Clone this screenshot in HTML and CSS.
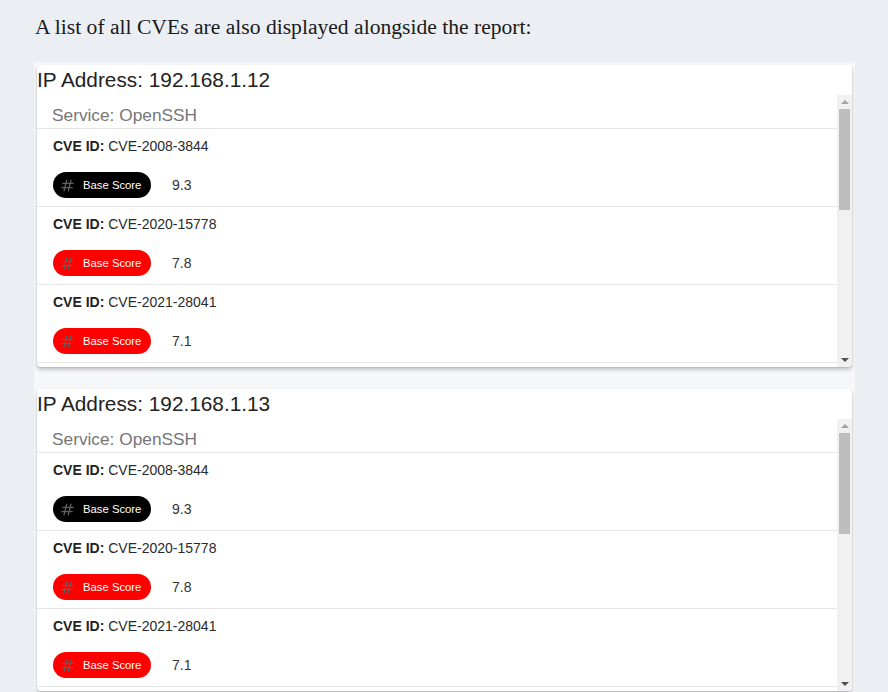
FILE: index.html
```html
<!DOCTYPE html>
<html lang="en">
<head>
<meta charset="utf-8">
<title>CVE list</title>
<link rel="stylesheet" href="styles.css">
</head>
<body>
<div class="page">
  <p class="intro">A list of all CVEs are also displayed alongside the report:</p>
  <div class="band">
    <section class="card">
      <h2 class="card-title">IP Address: 192.168.1.12</h2>
      <div class="card-body">
        <ul class="cve-list">
          <li class="subheader">Service: OpenSSH</li>
          <li class="item"><div class="cve"><b>CVE ID:</b> CVE-2008-3844</div><div class="score-row"><span class="chip chip-critical"><svg class="chip-icon" viewBox="0 0 24 24"><path d="M20.5 10 21 8h-4l1-4h-2l-1 4h-4l1-4h-2L9 8H5l-.5 2h4l-1 4h-4L3 16h4l-1 4h2l1-4h4l-1 4h2l1-4h4l.5-2h-4l1-4h4zm-7 4h-4l1-4h4l-1 4z"/></svg><span class="chip-label">Base Score</span></span><span class="score">9.3</span></div></li>
          <li class="item"><div class="cve"><b>CVE ID:</b> CVE-2020-15778</div><div class="score-row"><span class="chip chip-high"><svg class="chip-icon" viewBox="0 0 24 24"><path d="M20.5 10 21 8h-4l1-4h-2l-1 4h-4l1-4h-2L9 8H5l-.5 2h4l-1 4h-4L3 16h4l-1 4h2l1-4h4l-1 4h2l1-4h4l.5-2h-4l1-4h4zm-7 4h-4l1-4h4l-1 4z"/></svg><span class="chip-label">Base Score</span></span><span class="score">7.8</span></div></li>
          <li class="item"><div class="cve"><b>CVE ID:</b> CVE-2021-28041</div><div class="score-row"><span class="chip chip-high"><svg class="chip-icon" viewBox="0 0 24 24"><path d="M20.5 10 21 8h-4l1-4h-2l-1 4h-4l1-4h-2L9 8H5l-.5 2h4l-1 4h-4L3 16h4l-1 4h2l1-4h4l-1 4h2l1-4h4l.5-2h-4l1-4h4zm-7 4h-4l1-4h4l-1 4z"/></svg><span class="chip-label">Base Score</span></span><span class="score">7.1</span></div></li>
          <li class="item"><div class="cve"><b>CVE ID:</b> CVE-2021-41617</div><div class="score-row"><span class="chip chip-high"><svg class="chip-icon" viewBox="0 0 24 24"><path d="M20.5 10 21 8h-4l1-4h-2l-1 4h-4l1-4h-2L9 8H5l-.5 2h4l-1 4h-4L3 16h4l-1 4h2l1-4h4l-1 4h2l1-4h4l.5-2h-4l1-4h4zm-7 4h-4l1-4h4l-1 4z"/></svg><span class="chip-label">Base Score</span></span><span class="score">7.0</span></div></li>
        </ul>
        <div class="scrollbar" aria-hidden="true">
          <div class="sb-btn"><span class="sb-arrow-up"></span></div>
          <div class="sb-track"><div class="sb-thumb"></div></div>
          <div class="sb-btn"><span class="sb-arrow-down"></span></div>
        </div>
      </div>
    </section>
    <section class="card">
      <h2 class="card-title">IP Address: 192.168.1.13</h2>
      <div class="card-body">
        <ul class="cve-list">
          <li class="subheader">Service: OpenSSH</li>
          <li class="item"><div class="cve"><b>CVE ID:</b> CVE-2008-3844</div><div class="score-row"><span class="chip chip-critical"><svg class="chip-icon" viewBox="0 0 24 24"><path d="M20.5 10 21 8h-4l1-4h-2l-1 4h-4l1-4h-2L9 8H5l-.5 2h4l-1 4h-4L3 16h4l-1 4h2l1-4h4l-1 4h2l1-4h4l.5-2h-4l1-4h4zm-7 4h-4l1-4h4l-1 4z"/></svg><span class="chip-label">Base Score</span></span><span class="score">9.3</span></div></li>
          <li class="item"><div class="cve"><b>CVE ID:</b> CVE-2020-15778</div><div class="score-row"><span class="chip chip-high"><svg class="chip-icon" viewBox="0 0 24 24"><path d="M20.5 10 21 8h-4l1-4h-2l-1 4h-4l1-4h-2L9 8H5l-.5 2h4l-1 4h-4L3 16h4l-1 4h2l1-4h4l-1 4h2l1-4h4l.5-2h-4l1-4h4zm-7 4h-4l1-4h4l-1 4z"/></svg><span class="chip-label">Base Score</span></span><span class="score">7.8</span></div></li>
          <li class="item"><div class="cve"><b>CVE ID:</b> CVE-2021-28041</div><div class="score-row"><span class="chip chip-high"><svg class="chip-icon" viewBox="0 0 24 24"><path d="M20.5 10 21 8h-4l1-4h-2l-1 4h-4l1-4h-2L9 8H5l-.5 2h4l-1 4h-4L3 16h4l-1 4h2l1-4h4l-1 4h2l1-4h4l.5-2h-4l1-4h4zm-7 4h-4l1-4h4l-1 4z"/></svg><span class="chip-label">Base Score</span></span><span class="score">7.1</span></div></li>
          <li class="item"><div class="cve"><b>CVE ID:</b> CVE-2021-41617</div><div class="score-row"><span class="chip chip-high"><svg class="chip-icon" viewBox="0 0 24 24"><path d="M20.5 10 21 8h-4l1-4h-2l-1 4h-4l1-4h-2L9 8H5l-.5 2h4l-1 4h-4L3 16h4l-1 4h2l1-4h4l-1 4h2l1-4h4l.5-2h-4l1-4h4zm-7 4h-4l1-4h4l-1 4z"/></svg><span class="chip-label">Base Score</span></span><span class="score">7.0</span></div></li>
        </ul>
        <div class="scrollbar" aria-hidden="true">
          <div class="sb-btn"><span class="sb-arrow-up"></span></div>
          <div class="sb-track"><div class="sb-thumb"></div></div>
          <div class="sb-btn"><span class="sb-arrow-down"></span></div>
        </div>
      </div>
    </section>
  </div>
</div>
</body>
</html>
```

FILE: styles.css
```css
html, body {
  margin: 0;
  padding: 0;
  background: #ebeef3;
  overflow: hidden;
}

.page {
  width: 821px;
  margin-left: 34px;
}

.intro {
  margin: 0;
  padding: 14px 0 0 1px;
  height: 48px;
  box-sizing: border-box;
  font-family: "Liberation Serif", "Times New Roman", serif;
  font-size: 21.6px;
  line-height: 26px;
  color: #1a1a1a;
}

.band {
  margin-top: 14px;
  background: #f6f7f9;
  padding: 3px 3px 0 3px;
  height: 700px;
}

.card {
  background: #fff;
  border-radius: 4px;
  box-shadow: 0 3px 4px rgba(0, 0, 0, 0.18), 0 1px 2px rgba(0, 0, 0, 0.12);
  margin-bottom: 22px;
  font-family: "Liberation Sans", Arial, sans-serif;
  overflow: hidden;
}

.card-title {
  margin: 0;
  height: 30px;
  font-weight: normal;
  font-size: 20.8px;
  line-height: 30px;
  color: #222;
}

.card-body {
  display: flex;
  height: 272px;
}

.cve-list {
  flex: 1;
  list-style: none;
  margin: 0;
  padding: 0;
  overflow: hidden;
}

.scrollbar {
  width: 15px;
  flex: none;
  display: flex;
  flex-direction: column;
  background: #f1f1f1;
}

.sb-btn {
  height: 14px;
  flex: none;
  display: flex;
  align-items: center;
  justify-content: center;
}

.sb-arrow-up {
  width: 0;
  height: 0;
  border-left: 4px solid transparent;
  border-right: 4px solid transparent;
  border-bottom: 4px solid #a3a3a3;
}

.sb-arrow-down {
  width: 0;
  height: 0;
  border-left: 4px solid transparent;
  border-right: 4px solid transparent;
  border-top: 4px solid #505050;
}

.sb-track {
  flex: 1;
}

.sb-thumb {
  height: 101px;
  margin: 0 2px;
  background: #bebebe;
}

.subheader {
  padding: 7px 0 0 15px;
  height: 26px;
  line-height: 26px;
  font-size: 17.3px;
  color: #767676;
  border-bottom: 1px solid #e6e6e6;
}

.item {
  padding: 7px 0 8px 16px;
  border-bottom: 1px solid #e6e6e6;
}

.cve {
  height: 20px;
  line-height: 20px;
  font-size: 14px;
  color: #2a2a2a;
}

.cve b {
  color: #222;
}

.score-row {
  margin-top: 16px;
  display: flex;
  align-items: center;
  height: 26px;
}

.chip {
  display: inline-flex;
  align-items: center;
  height: 26px;
  width: 98px;
  box-sizing: border-box;
  border-radius: 13px;
  padding-left: 6px;
}

.chip-critical { background: #000; }
.chip-high { background: #fe0000; }

.chip-icon {
  width: 17px;
  height: 17px;
  fill: #5f5f5f;
  flex: none;
}

.chip-label {
  margin-left: 7px;
  font-size: 11.3px;
  color: #fff;
}

.score {
  margin-left: 21px;
  font-size: 14px;
  color: #333;
}
```
